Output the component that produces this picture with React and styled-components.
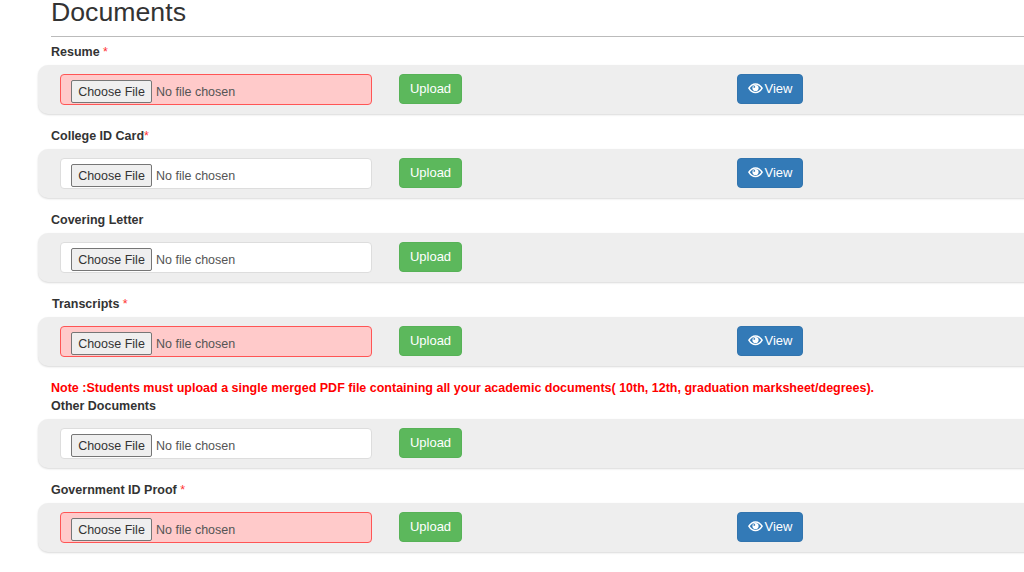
import React from "react";
import styled, { createGlobalStyle } from "styled-components";

const Global = createGlobalStyle`
  html, body { margin: 0; padding: 0; background: #fff; overflow: hidden; }
  body { font-family: "Liberation Sans", Arial, sans-serif; color: #333; }
`;
const Page = styled.main`
  width: 1024px;
  height: 572px;
  overflow: hidden;
  box-sizing: border-box;
  padding-left: 38px;
`;
const Title = styled.h2`
  margin: 0 0 13px 13px;
  padding-top: 1px;
  font-size: 26.7px;
  line-height: 22px;
  font-weight: 400;
  color: #333;
`;
const Rule = styled.hr`
  margin: 0 0 4px 13px;
  border: 0;
  border-top: 1px solid #bbb;
`;
const Label = styled.label`
  display: block;
  margin: 0 0 2px ${(p) => (p.$nudge ? 14 : 13)}px;
  font-size: 12.5px;
  line-height: 22px;
  font-weight: 700;
  color: #333;
`;
const Star = styled.span`
  color: #f33;
  font-weight: 400;
`;
const Bar = styled.div`
  display: grid;
  grid-template-columns: 312px 311px auto;
  column-gap: 27px;
  align-items: start;
  justify-content: start;
  box-sizing: border-box;
  height: 49px;
  margin: 0 -20px 11px 0;
  padding: 9px 0 0 22px;
  background: #eee;
  border-radius: 10px;
  box-shadow: 0 1px 2px rgba(0, 0, 0, 0.15);
`;
const FileInput = styled.input.attrs({ type: "file" })`
  display: block;
  box-sizing: border-box;
  width: 312px;
  height: 31px;
  padding: 5px 10px;
  font-family: "Liberation Sans", Arial, sans-serif;
  font-size: 12.5px;
  line-height: 19px;
  color: #555;
  border-radius: 4px;
  border: 1px solid ${(p) => (p.$invalid ? "#f55" : "#ddd")};
  background: ${(p) => (p.$invalid ? "#ffcaca" : "#fff")};

  &::file-selector-button {
    box-sizing: border-box;
    width: 81px;
    height: 23px;
    margin: 0 4px 0 0;
    padding: 0;
    font-family: "Liberation Sans", Arial, sans-serif;
    font-size: 12.5px;
    color: #333;
    background: #efefef;
    border: 1px solid #767676;
    border-radius: 2px;
  }
`;
const Button = styled.button`
  display: flex;
  align-items: center;
  justify-content: center;
  gap: 2px;
  box-sizing: border-box;
  height: 30px;
  width: ${(p) => (p.$view ? 66 : 63)}px;
  padding: 0 0 2px;
  border: 1px solid ${(p) => (p.$view ? "#3174ae" : "#57b257")};
  border-radius: 4px;
  background: ${(p) => (p.$view ? "#337ab7" : "#5cb85c")};
  color: #fff;
  font-family: "Liberation Sans", Arial, sans-serif;
  font-size: 13px;
`;
const Note = styled.p`
  margin: 0 0 0 13px;
  height: 18px;
  font-size: 12.5px;
  line-height: 22px;
  font-weight: 700;
  color: #f00;
  white-space: nowrap;
`;

const Eye = () => (
  <svg width="15" height="11" viewBox="0 0 15 11" aria-hidden="true">
    <path
      d="M0.900 5.200C2.600 2.300 4.800 0.900 7.500 0.900s4.900 1.400 6.600 4.300C12.400 8.100 10.200 9.500 7.500 9.500S2.600 8.100 0.900 5.200z"
      fill="none"
      stroke="#fff"
      strokeWidth="1.500"
    />
    <circle cx="7.500" cy="5" r="3.100" fill="#fff" />
    <circle cx="6.300" cy="3.900" r="0.900" fill="#337ab7" />
  </svg>
);

const rowsA = [
  { label: "Resume", star: " *", invalid: true, view: true },
  { label: "College ID Card", star: "*", view: true },
  { label: "Covering Letter" },
  { label: "Transcripts", star: " *", invalid: true, view: true, nudge: true },
];
const rowsB = [
  { label: "Other Documents" },
  { label: "Government ID Proof", star: " *", invalid: true, view: true },
];

const Row = ({ label, star, invalid, view, nudge }) => (
  <>
    <Label $nudge={nudge}>
      {label}
      {star && <Star>{star}</Star>}
    </Label>
    <Bar>
      <FileInput $invalid={invalid} />
      <Button>Upload</Button>
      {view && (
        <Button $view>
          <Eye />
          View
        </Button>
      )}
    </Bar>
  </>
);

export default function App() {
  return (
    <Page>
      <Global />
      <Title>Documents</Title>
      <Rule />
      {rowsA.map((r) => (
        <Row key={r.label} {...r} />
      ))}
      <Note>
        Note :Students must upload a single merged PDF file containing all your academic documents( 10th, 12th, graduation marksheet/degrees).
      </Note>
      {rowsB.map((r) => (
        <Row key={r.label} {...r} />
      ))}
    </Page>
  );
}
